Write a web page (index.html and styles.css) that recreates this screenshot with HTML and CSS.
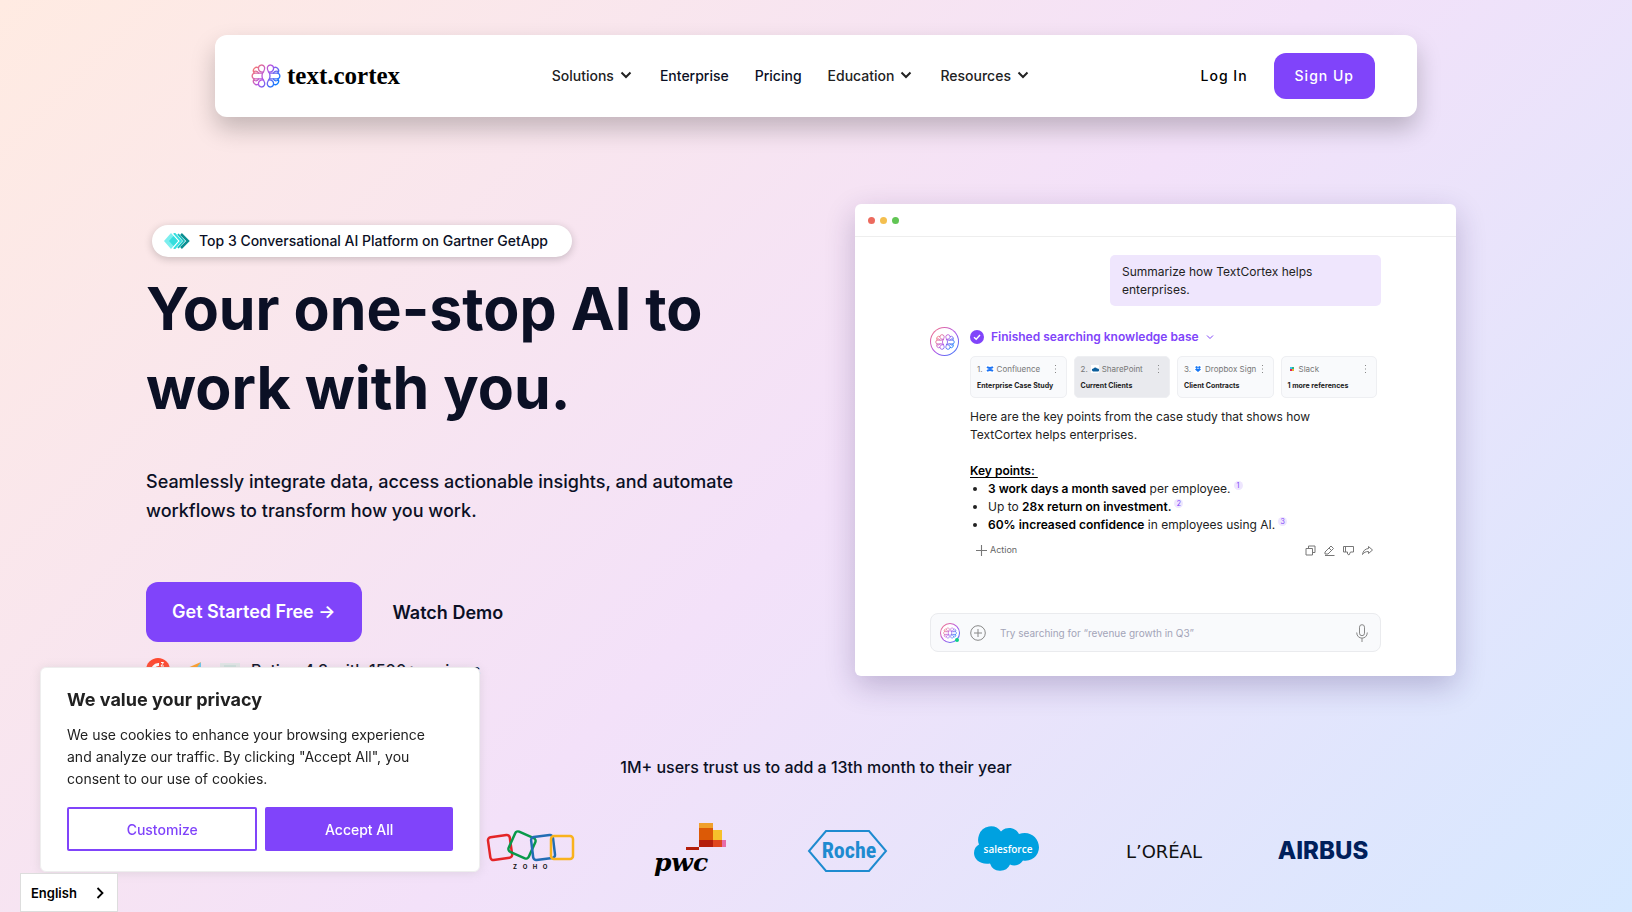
FILE: index.html
```html
<!DOCTYPE html>
<html lang="en">
<head>
<meta charset="utf-8">
<meta name="viewport" content="width=device-width, initial-scale=1">
<title>TextCortex</title>
<link rel="stylesheet" href="styles.css">
</head>
<body>
<svg class="defs" aria-hidden="true">
  <defs>
    <linearGradient id="brand" gradientUnits="userSpaceOnUse" x1="2" y1="3" x2="26" y2="20">
      <stop offset="0" stop-color="#fb7a6a"/><stop offset=".5" stop-color="#b254e6"/><stop offset="1" stop-color="#0b7cff"/>
    </linearGradient>
    <linearGradient id="brand-flip" gradientUnits="userSpaceOnUse" x1="28" y1="3" x2="4" y2="20">
      <stop offset="0" stop-color="#fb7a6a"/><stop offset=".5" stop-color="#b254e6"/><stop offset="1" stop-color="#0b7cff"/>
    </linearGradient>
    <g id="lobe">
      <path d="M12.500 8C9 8.300 7.200 6.400 7.400 3.800A3.200 3.200 0 0 1 13.600 3.200C14 5 13.400 6.400 12.500 8z"/>
      <path d="M12.500 16C9 15.700 7.200 17.600 7.400 20.200A3.200 3.200 0 0 0 13.600 20.800C14 19 13.400 17.600 12.500 16z"/>
      <path d="M7.400 3.800A3.400 3.400 0 0 0 3.200 9M7.400 20.200A3.400 3.400 0 0 1 3.200 15M3.200 7.400C5 6.800 7 7.400 7.600 9.200M3.500 16.500C5 17 7 16.600 7.600 14.900"/>
      <path d="M11 9.200H3.500A2.900 2.900 0 0 0 3.500 14.900H11M12.200 8Q9.800 12 12.200 16"/>
    </g>
    <symbol id="brain" viewBox="0 0 30 24">
      <g fill="none" stroke-width="1.300" stroke-linejoin="round" stroke-linecap="round">
        <use href="#lobe" stroke="url(#brand)"/>
        <use href="#lobe" stroke="url(#brand-flip)" transform="matrix(-1 0 0 1 30 0)"/>
      </g>
    </symbol>
    <symbol id="chevron" viewBox="0 0 12 12"><path d="M1.500 3.500 6 8l4.500-4.500" fill="none" stroke="currentColor" stroke-width="2"/></symbol>
    <symbol id="dots" viewBox="0 0 3 10"><path d="M1 1h1v1H1zM1 4.500h1v1H1zM1 8h1v1H1z" fill="#888"/></symbol>
  </defs>
</svg>

<header class="nav">
  <a class="brand" href="#"><svg class="brand-icon"><use href="#brain"/></svg>text.cortex</a>
  <nav class="menu" aria-label="Main">
    <button class="menu-item" type="button">Solutions <svg class="chev"><use href="#chevron"/></svg></button>
    <a class="menu-item dark" href="#">Enterprise</a>
    <a class="menu-item dark" href="#">Pricing</a>
    <button class="menu-item" type="button">Education <svg class="chev"><use href="#chevron"/></svg></button>
    <button class="menu-item" type="button">Resources <svg class="chev"><use href="#chevron"/></svg></button>
  </nav>
  <div class="account">
    <a class="login" href="#">Log In</a>
    <a class="signup" href="#">Sign Up</a>
  </div>
</header>

<main>
  <section class="hero">
    <div class="intro">
      <a class="badge" href="#">
        <svg class="badge-icon" viewBox="0 0 26 16"><path d="M7 0l7 8-7 8-7-8z" fill="#7ceeee"/><path d="M9.500 3l4.500 5-4.500 5L5 8z" fill="#35dede"/><path d="M10 0l7 8-7 8" fill="none" stroke="#35e0e0" stroke-width="2"/><path d="M14 1l6 7-6 7" fill="none" stroke="#19bdbd" stroke-width="1.800"/><path d="M17 1l7 7-7 7" fill="none" stroke="#0b8f92" stroke-width="2.500"/></svg>
        <span>Top 3 Conversational AI Platform on Gartner GetApp</span>
      </a>
      <h1>Your one-stop AI to<br>work with you.</h1>
      <p class="lead">Seamlessly integrate data, access actionable insights, and automate workflows to transform how you work.</p>
      <div class="actions">
        <a class="cta" href="#">Get Started Free →</a>
        <a class="demo" href="#">Watch Demo</a>
      </div>
      <div class="rating">
        <svg viewBox="0 0 24 24"><circle cx="12" cy="12" r="12" fill="#ff4930"/><path d="M13 6.500a6 6 0 1 0 4 10l-2-3h-4" fill="none" stroke="#fff" stroke-width="2.800"/><path d="M15 4.500h2.500l-2.500 3.500h3" fill="none" stroke="#fff"/></svg>
        <svg viewBox="0 0 24 24"><path d="M3 11 19 4 14 13z" fill="#ff9d28"/><path d="M19 4v20l-6-12z" fill="#68c5ed"/><path d="M12 13l3 5-5 1z" fill="#e54747"/></svg>
        <svg viewBox="0 0 24 24"><path d="M2 5h20v19H2z" fill="#e2e6e7"/><path d="M6 8h12" stroke="#cfe0dd" stroke-width="2"/></svg>
        <span>Rating 4.8 with 1500+ reviews</span>
      </div>
    </div>

    <div class="window">
      <div class="titlebar"><i class="dot red"></i><i class="dot yellow"></i><i class="dot green"></i></div>
      <div class="chat">
        <p class="question">Summarize how TextCortex helps enterprises.</p>
        <div class="answer">
          <div class="avatar"><svg><use href="#brain"/></svg></div>
          <div class="reply">
            <div class="status">
              <svg class="check" viewBox="0 0 14 14"><circle cx="7" cy="7" r="7" fill="#8044fa"/><path d="M4 7.200 6.200 9.300 10 5" fill="none" stroke="#fff" stroke-width="1.400"/></svg>
              Finished searching knowledge base
              <svg class="thin" viewBox="0 0 8 6"><path d="M1 1.500l3 3 3-3" fill="none" stroke="#8044fa"/></svg>
            </div>
            <div class="sources">
              <div class="source"><div class="source-top">1.<svg class="app" viewBox="0 0 8 8"><path d="M0 0h8v8H0z" fill="#fff"/><path d="M1 2Q4 4 7 2M1 6Q4 4 7 6" fill="none" stroke="#1d74f5" stroke-width="2"/></svg><span>Confluence</span><svg class="more"><use href="#dots"/></svg></div><b>Enterprise Case Study</b></div>
              <div class="source active"><div class="source-top">2.<svg class="app" viewBox="0 0 8 8"><path d="M0 0h8v8H0z" fill="#fff"/><path d="M1 5.500a1.500 1.500 0 0 1 1.500-2 2 2 0 0 1 3.500 0 1.500 1.500 0 0 1 1 3H2z" fill="#0b5e9c"/></svg><span>SharePoint</span><svg class="more"><use href="#dots"/></svg></div><b>Current Clients</b></div>
              <div class="source"><div class="source-top">3.<svg class="app" viewBox="0 0 8 8"><path d="M0 0h8v8H0z" fill="#fff"/><path d="M2.500 1 4 2 5.500 1 7 2.200 5.500 3.300 7 4.400 4 7 1 4.400 2.500 3.300 1 2.200zM4 2.600 3 3.300 4 4.100 5 3.300z" fill="#1677f5" fill-rule="evenodd"/></svg><span>Dropbox Sign</span><svg class="more"><use href="#dots"/></svg></div><b>Client Contracts</b></div>
              <div class="source"><div class="source-top"><svg class="app" viewBox="0 0 8 8"><path d="M2 2h2v2H2z" fill="#36c5f0"/><path d="M4 2h2v2H4z" fill="#2eb67d"/><path d="M2 4h2v2H2z" fill="#e01e5a"/><path d="M4 4h2v2H4z" fill="#ecb22e"/></svg><span>Slack</span><svg class="more"><use href="#dots"/></svg></div><b>1 more references</b></div>
            </div>
            <p class="summary">Here are the key points from the case study that shows how TextCortex helps enterprises.</p>
            <p class="key"><u>Key points:&nbsp;</u></p>
            <ul>
              <li><b>3 work days a month saved</b> per employee.<span class="ref">1</span></li>
              <li>Up to <b>28x return on investment.</b><span class="ref">2</span></li>
              <li><b>60% increased confidence</b> in employees using AI.<span class="ref">3</span></li>
            </ul>
            <div class="tools">
              <button class="action" type="button"><svg viewBox="0 0 10 10"><path d="M5 0v10M0 5h10"/></svg>Action</button>
              <div class="tool-icons">
                <button type="button" aria-label="Copy"><svg viewBox="0 0 11 11"><path d="M1 3.500h6.500V10H1zM3.500 3.500V1H10v6.500H7.500"/></svg></button>
                <button type="button" aria-label="Edit"><svg viewBox="0 0 11 11"><path d="M1 7 7 1l2.500 2.500L4 9H1zM5 3l2.500 2.500M1 10.500h9.500"/></svg></button>
                <button type="button" aria-label="Dislike"><svg viewBox="0 0 11 11"><path d="M.5 1.500h10V7H7.500L6 10 4.500 9V7H.500zM2.500 1.500V7"/></svg></button>
                <button type="button" aria-label="Share"><svg viewBox="0 0 11 11"><path d="M6.500 1.500l4 3.500-4 3.500v-2C3.500 6.500 2 7.500.5 9.500 1 6 3 3.800 6.500 3.500z"/></svg></button>
              </div>
            </div>
          </div>
        </div>
        <div class="prompt">
          <div class="avatar small"><svg><use href="#brain"/></svg><i class="online"></i></div>
          <svg class="plus" viewBox="0 0 16 16"><circle cx="8" cy="8" r="7.300"/><path d="M8 4v8M4 8h8"/></svg>
          <input type="text" aria-label="Search" placeholder="Try searching for “revenue growth in Q3”">
          <svg class="mic" viewBox="0 0 12 18"><rect x="3.500" y=".700" width="5" height="11" rx="2.500"/><path d="M.7 8.500C.7 16 11.300 16 11.300 8.500M6 14v4"/></svg>
        </div>
      </div>
    </div>
  </section>

  <section class="trust">
    <p>1M+ users trust us to add a 13th month to their year</p>
    <div class="logos">
      <svg class="first" viewBox="0 0 90 60" role="img" aria-label="Zoho"><g fill="none" stroke-width="2.500" stroke-linejoin="round"><rect x="3" y="15" width="22" height="23" rx="3" stroke="#e42527" transform="rotate(-8 14 26)"/><rect x="25" y="13" width="22" height="22" rx="3" stroke="#089949" transform="rotate(24 36 24)"/><rect x="46" y="15" width="22" height="23" rx="3" stroke="#226db4" transform="rotate(-7 57 26)"/><rect x="65" y="15" width="22" height="23" rx="3" stroke="#f9b21d"/></g><g class="t-zoho"><text x="29" y="48">Z</text><text x="39" y="48">O</text><text x="49" y="48">H</text><text x="59" y="48">O</text></g></svg>
      <svg viewBox="0 0 90 60" role="img" aria-label="PwC"><path d="M55 2h14v24H55z" fill="#dc5a06"/><path d="M55 2h14v5H55z" fill="#f0a02c"/><path d="M69 9h9v10h-9z" fill="#f6c12b"/><path d="M69 19h9v7h-9z" fill="#e0471f"/><path d="M78 19h4v7h-4z" fill="#e66ba8"/><path d="M55 19h14v7H55zM42 26h13v3H42z" fill="#b41e0c"/><text x="37" y="50" class="t-pwc">pwc</text></svg>
      <svg viewBox="0 0 90 60" role="img" aria-label="Roche"><path d="M23 10h43l17 20-17 20H23L6 30z" fill="none" stroke="#1e8bd0" stroke-width="2"/><text x="46" y="37" class="t-roche">Roche</text></svg>
      <svg viewBox="0 0 90 60" role="img" aria-label="Salesforce"><path d="M18 14a12.500 12.500 0 0 1 22-3.500 11 11 0 0 1 18 2.500c11-4 20 4 20 13.500a13.500 13.500 0 0 1-16 13c-3 5-9 6-13 4a10.800 10.800 0 0 1-20-1C19 44 13 38 13 32c0-4 2-7 5-8.500C16.500 20 17 17 18 14z" fill="#00a1e0"/><text x="47" y="32" class="t-sales">salesforce</text></svg>
      <svg viewBox="0 0 90 60" role="img" aria-label="L'Oréal"><text x="45" y="37" class="t-loreal">L’ORÉAL</text></svg>
      <svg viewBox="0 0 90 60" role="img" aria-label="Airbus"><text x="45" y="38" class="t-airbus">AIRBUS</text></svg>
    </div>
  </section>
</main>

<section class="cookie" aria-labelledby="cookie-title">
  <h2 id="cookie-title">We value your privacy</h2>
  <p>We use cookies to enhance your browsing experience and analyze our traffic. By clicking "Accept All", you consent to our use of cookies.</p>
  <div class="cookie-actions"><button class="outline" type="button">Customize</button><button class="solid" type="button">Accept All</button></div>
</section>
<button class="language" type="button">English <svg viewBox="0 0 8 12"><path d="M1.500 1l5 5-5 5" fill="none" stroke="#000" stroke-width="1.800"/></svg></button>
</body>
</html>
```
FILE: styles.css
```css
* { box-sizing: border-box; }
body {
  margin: 0;
  min-height: 100vh;
  overflow: hidden;
  font-family: Inter, "Liberation Sans", sans-serif;
  color: #0b1025;
  background: linear-gradient(135deg, #ffebe2 0%, #f3e1f9 52%, #d6e8ff 100%);
}
h1, h2, p, ul { margin: 0; padding: 0; }
a { color: inherit; text-decoration: none; }
button { font: inherit; color: inherit; background: none; border: 0; padding: 0; cursor: pointer; }
svg { display: block; flex: none; }
.defs { position: absolute; width: 0; height: 0; }

.nav {
  display: flex;
  align-items: center;
  justify-content: space-between;
  width: calc(100% - 430px);
  margin: 35px auto 0;
  padding: 18px 42px 18px 36px;
  border-radius: 12px;
  background: #fff;
  box-shadow: 0 12px 24px rgba(0, 0, 0, .22);
}
.brand { display: flex; align-items: center; gap: 6px; font: bold 25px "Liberation Serif", serif; color: #000; }
.brand-icon { width: 30px; height: 24px; }
.menu { display: flex; gap: 26px; margin-right: 18px; padding-bottom: 2px; font-size: 14px; font-weight: 500; }
.menu-item { display: flex; align-items: center; gap: 6px; color: #222; }
button.menu-item { padding-right: 2px; }
.menu-item.dark { color: #0b1025; }
.chev { width: 12px; height: 12px; }
.account { display: flex; gap: 26px; font-size: 14px; line-height: 46px; font-weight: 500; letter-spacing: 1px; color: #000; }
.signup { padding: 0 21px; border-radius: 12px; background: #8044fa; color: #fff; }

.hero { display: grid; grid-template-columns: 601px minmax(0, 601px); justify-content: space-between; align-items: start; margin: 87px 176px 0 146px; }
.intro { padding-top: 21px; }
.badge {
  display: inline-flex; align-items: center; gap: 9px;
  height: 32px; margin-left: 6px; padding: 0 24px 0 12px;
  border-radius: 16px; background: #fff; font-size: 14px; font-weight: 500;
  box-shadow: 0 2px 8px rgba(0, 0, 0, .2);
}
.badge span { padding-bottom: 2px; }
.badge-icon { width: 26px; height: 16px; }
h1 { margin-top: 12px; font-size: 59px; line-height: 79px; font-weight: 700; }
.lead { margin-top: 40px; font-size: 18px; line-height: 29px; font-weight: 500; }
.actions { display: flex; align-items: center; gap: 30px; margin-top: 57px; font-size: 18px; font-weight: 600; }
.cta { padding: 0 27px 0 26px; line-height: 60px; border-radius: 12px; background: #8044fa; color: #fff; }
.rating { display: flex; align-items: center; gap: 12px; margin-top: 16px; font-size: 16px; font-weight: 500; }
.rating svg { width: 24px; height: 24px; }
.rating span { margin-left: -3px; }

.window { border-radius: 6px; background: #fff; box-shadow: 0 10px 30px rgba(40, 20, 90, .24); }
.titlebar { display: flex; align-items: center; gap: 5px; height: 33px; padding: 0 13px; border-bottom: 1px solid #eee; }
.dot { width: 7px; height: 7px; border-radius: 50%; }
.red { background: #ec6a5e; }
.yellow { background: #f4bf4f; }
.green { background: #61c554; }
.chat { padding: 18px 75px 24px; color: #222; font-size: 12px; line-height: 18px; }
.question { width: 271px; margin-left: auto; padding: 8px 12px 7px; border-radius: 5px; background: #efe6fd; }
.answer { display: grid; grid-template-columns: 29px minmax(0, 1fr); gap: 11px; margin-top: 21px; }
.avatar {
  position: relative; display: grid; place-items: center; width: 29px; height: 29px; border-radius: 50%;
  border: 1px solid transparent;
  background: linear-gradient(#fff, #fff) padding-box, linear-gradient(135deg, #f77, #b254e6, #2a7cff) border-box;
}
.avatar svg { width: 20px; height: 16px; }
.status { display: flex; align-items: center; gap: 7px; height: 20px; font-weight: 600; color: #8044fa; }
.check { width: 14px; height: 14px; }
.thin { width: 8px; height: 6px; }
.sources { display: grid; grid-template-columns: repeat(4, 1fr); gap: 7px; margin: 9px 4px 0 0; }
.source { height: 42px; padding: 6px 5px 0 6px; border: 1px solid #eeeff2; border-radius: 5px; background: #f9fafc; font-size: 8px; line-height: 12px; white-space: nowrap; }
.source b { display: block; margin-top: 5px; font-size: 7px; font-weight: 700; }
.active { background: #e9eaee; }
.source-top { display: flex; align-items: center; gap: 3px; color: #777; }
.app { width: 8px; height: 8px; }
.more { width: 3px; height: 10px; margin: 0 4px 0 auto; }
.summary { margin-top: 10px; padding-right: 30px; }
.key { margin-top: 18px; font-weight: 600; color: #000; }
.key u { text-underline-offset: 2px; }
.reply ul { padding-left: 18px; }
.reply li b { font-weight: 600; color: #000; }
.ref { display: inline-block; width: 9px; height: 9px; margin-left: 3px; border-radius: 50%; background: #eee6fe; color: #8044fa; font-size: 7px; line-height: 9px; text-align: center; vertical-align: 5px; }
.tools { display: flex; justify-content: space-between; align-items: center; margin-top: 7px; padding: 0 8px 0 6px; }
.tools svg { fill: none; stroke: #777; width: 11px; height: 11px; }
.action { display: flex; align-items: center; gap: 3px; font-size: 9px; color: #666; }
.tool-icons { display: flex; gap: 8px; }
.prompt { display: flex; align-items: center; gap: 10px; height: 39px; margin-top: 54px; padding: 0 12px 0 9px; border: 1px solid #eaebee; border-radius: 8px; background: #f9fafc; }
.small { width: 20px; height: 20px; }
.small svg { width: 14px; height: 12px; }
.online { position: absolute; right: 0; bottom: 0; width: 4px; height: 4px; border-radius: 50%; background: #0dcf8b; }
.plus, .mic { fill: none; stroke: #888; }
.plus { width: 16px; height: 16px; }
.mic { width: 12px; height: 18px; }
.prompt input { flex: 1; min-width: 0; padding: 0 0 0 4px; border: 0; background: none; font: 10px Inter, sans-serif; }
.prompt input::placeholder { color: #a3a4b8; opacity: 1; }

.trust { margin-top: 75px; text-align: center; }
.trust p { font-size: 16px; line-height: 20px; font-weight: 500; }
.logos { display: grid; grid-template-columns: repeat(8, 1fr); justify-items: center; margin: 44px 230px 0 135px; }
.first { grid-column-start: 3; }
.logos svg { width: 90px; height: 60px; }
.logos text { text-anchor: middle; }
.t-zoho { font: 700 6px Inter, sans-serif; fill: #111; }
.t-pwc { font: italic bold 25px "DejaVu Serif", serif; fill: #000; }
.t-roche { font: bold 22px "Liberation Sans Narrow", "Roboto Condensed", sans-serif; fill: #1e8bd0; }
.t-sales { font: 600 10px "Open Sans", sans-serif; fill: #fff; }
.t-loreal { font: 400 18px "DejaVu Sans", sans-serif; fill: #111; }
.t-airbus { font: 800 24px Inter, sans-serif; fill: #00205b; }

.cookie { position: fixed; left: 40px; bottom: 40px; width: 440px; padding: 20px 26px; border: 1px solid #eee; border-radius: 6px; background: #fff; color: #212121; box-shadow: 0 1px 10px rgba(172, 171, 171, .3); }
.cookie h2 { font-size: 18px; line-height: 24px; font-weight: 700; }
.cookie p { margin-top: 12px; font-size: 14px; line-height: 22px; }
.cookie-actions { display: flex; gap: 8px; margin-top: 17px; font-size: 14px; font-weight: 500; }
.cookie-actions button { flex: 1 1 auto; height: 44px; border: 2px solid #8044fa; border-radius: 2px; }
.outline { color: #8044fa; }
.cookie-actions .solid { background: #8044fa; color: #fff; }
.language { position: fixed; left: 20px; bottom: 0; display: flex; align-items: center; justify-content: space-between; width: 98px; height: 39px; padding: 0 13px 0 10px; border: 1px solid #ddd; background: #fff; color: #000; font-size: 13px; font-weight: 600; }
.language svg { width: 8px; height: 12px; }
```
